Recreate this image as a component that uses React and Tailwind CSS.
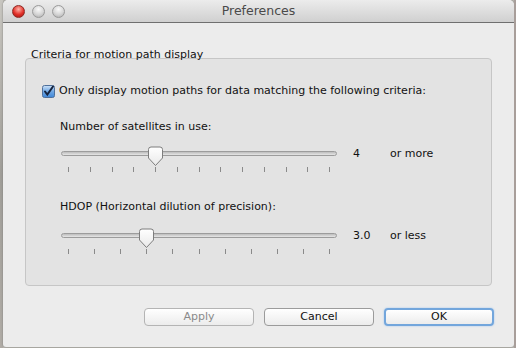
import React from "react";

const font = { fontFamily: '"Lucida Grande", "DejaVu Sans", sans-serif' };

function Thumb() {
  return (
    <svg width="17" height="21" viewBox="0 0 17 21" className="absolute top-0">
      <defs>
        <linearGradient id="tg" x1="0" y1="0" x2="0" y2="1">
          <stop offset="0" stopColor="#ffffff" />
          <stop offset="1" stopColor="#e9e9e9" />
        </linearGradient>
      </defs>
      <path
        d="M1.5 3.5 Q1.5 1 4 1 L13 1 Q15.5 1 15.5 3.5 L15.5 12 L8.5 19.5 L1.5 12 Z"
        fill="url(#tg)"
        stroke="#7d7d7d"
        strokeWidth="1"
      />
    </svg>
  );
}

function Slider({ ticks, index, value, suffix }) {
  const first = 7;
  const last = 268;
  const step = (last - first) / (ticks - 1);
  const center = first + step * index;
  return (
    <div className="flex items-start">
      <div className="relative w-[276px] h-[26px]">
        <div className="absolute left-0 right-0 top-[3px] h-[5px] rounded-full border border-[#9c9c9c] bg-gradient-to-b from-[#bdbdbd] to-[#e6e6e6]" />
        {Array.from({ length: ticks }).map((_, i) => (
          <div
            key={i}
            className="absolute top-[19px] w-px h-[5px] bg-[#8a8a8a]"
            style={{ left: Math.round(first + step * i) }}
          />
        ))}
        <div className="absolute top-[-2px]" style={{ left: Math.round(center - 8) }}>
          <div className="relative w-[17px] h-[21px]">
            <Thumb />
          </div>
        </div>
      </div>
      <span className="w-[37px] ml-[16px] -mt-[2px] text-[11px] text-[#111]">{value}</span>
      <span className="-mt-[2px] text-[11px] text-[#111]">{suffix}</span>
    </div>
  );
}

function Button({ label, disabled, focused }) {
  return (
    <div
      className={`w-[110px] h-[18px] rounded-[4px] flex items-center justify-center text-[11px] bg-gradient-to-b from-[#ffffff] to-[#ececec] ${
        focused
          ? "border-2 border-[#73a6dc] shadow-[0_0_2px_#9cc3ef]"
          : "border border-[#9b9b9b]"
      } ${disabled ? "text-[#8a8a8a] border-[#b4b4b4]" : "text-[#111]"}`}
    >
      {label}
    </div>
  );
}

export default function App() {
  return (
    <div className="w-[516px] h-[348px] bg-[#b9b7b0] overflow-hidden flex" style={font}>
      <div className="w-[3px] h-full bg-gradient-to-b from-[#c8c6c0] via-[#a09e98] to-[#b0aca6]" />
      <div className="w-[511px] h-[347px] bg-[#ececec] rounded-t-[5px] rounded-b-[3px] flex flex-col overflow-hidden shadow-[0_0_2px_#777]">
        <div className="h-[23px] flex items-center relative bg-gradient-to-b from-[#ececec] to-[#d0d0d0] border-b border-[#6f6f6f]">
          <div className="flex items-center gap-[7px] pl-[9px]">
            <div className="w-[13px] h-[13px] rounded-full bg-[radial-gradient(circle_at_50%_30%,#ffb3a8,#e2312a_55%,#9c130f)] border border-[#8e2a24]" />
            <div className="w-[13px] h-[13px] rounded-full bg-[radial-gradient(circle_at_50%_30%,#fafafa,#d5d5d5_55%,#a9a9a9)] border border-[#9a9a9a]" />
            <div className="w-[13px] h-[13px] rounded-full bg-[radial-gradient(circle_at_50%_30%,#fafafa,#d5d5d5_55%,#a9a9a9)] border border-[#9a9a9a]" />
          </div>
          <div className="absolute inset-0 flex items-center justify-center text-[12.5px] text-[#4a4a4a]">
            Preferences
          </div>
        </div>

        <div className="pl-[22px] pr-[20px]">
          <div className="mt-[25px] ml-[6px] text-[11px] leading-[14px] text-[#111]">
            Criteria for motion path display
          </div>
          <div className="-mt-[4px] w-[467px] h-[228px] rounded-[4px] border border-[#c6c6c6] bg-[#e3e3e3] pl-[16px] pt-[24px]">
            <div className="flex items-center">
              <svg width="13" height="13" viewBox="0 0 13 13">
                <defs>
                  <linearGradient id="cb" x1="0" y1="0" x2="0" y2="1">
                    <stop offset="0" stopColor="#cfe3f8" />
                    <stop offset="0.5" stopColor="#6fa7e4" />
                    <stop offset="1" stopColor="#3f86d6" />
                  </linearGradient>
                </defs>
                <rect x="0.5" y="0.5" width="12" height="12" rx="2" fill="url(#cb)" stroke="#4f6f9a" />
                <path d="M3 6.5 L5.3 9.5 L11 1.5" fill="none" stroke="#16243f" strokeWidth="2" strokeLinecap="round" />
              </svg>
              <span className="ml-[4px] text-[11px] text-[#111]">
                Only display motion paths for data matching the following criteria:
              </span>
            </div>

            <div className="mt-[20px] ml-[18px] text-[11px] leading-[14px] text-[#111]">
              Number of satellites in use:
            </div>
            <div className="mt-[14px] ml-[19px]">
              <Slider ticks={13} index={4} value="4" suffix="or more" />
            </div>

            <div className="mt-[26px] ml-[18px] text-[11px] leading-[14px] text-[#111]">
              HDOP (Horizontal dilution of precision):
            </div>
            <div className="mt-[16px] ml-[19px]">
              <Slider ticks={11} index={3} value="3.0" suffix="or less" />
            </div>
          </div>

          <div className="mt-[22px] flex justify-end gap-[10px]">
            <Button label="Apply" disabled />
            <Button label="Cancel" />
            <Button label="OK" focused />
          </div>
        </div>
      </div>
      <div className="w-[2px] h-full bg-[#a89e9a]" />
    </div>
  );
}
